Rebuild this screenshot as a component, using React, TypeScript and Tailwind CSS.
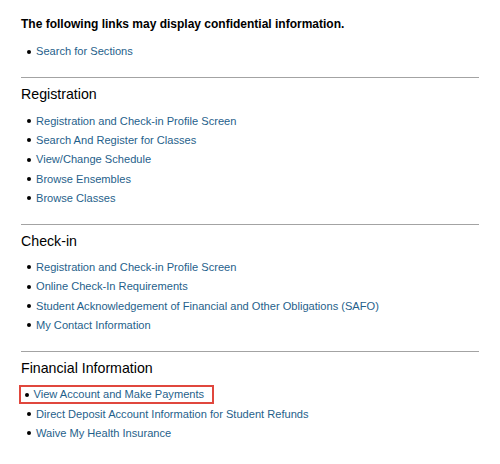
const LINK = "text-[#1f5f8b]";

type Section = { title: string; links: string[] };

const SECTIONS: Section[] = [
  {
    title: "Registration",
    links: [
      "Registration and Check-in Profile Screen",
      "Search And Register for Classes",
      "View/Change Schedule",
      "Browse Ensembles",
      "Browse Classes",
    ],
  },
  {
    title: "Check-in",
    links: [
      "Registration and Check-in Profile Screen",
      "Online Check-In Requirements",
      "Student Acknowledgement of Financial and Other Obligations (SAFO)",
      "My Contact Information",
    ],
  },
  {
    title: "Financial Information",
    links: [
      "View Account and Make Payments",
      "Direct Deposit Account Information for Student Refunds",
      "Waive My Health Insurance",
    ],
  },
];

function LinkRow({ text, boxed = false }: { text: string; boxed?: boolean }) {
  return (
    <li
      className={`flex h-[19.3px] items-center ${
        boxed ? "-ml-[2px] w-[195px] border-[2.5px] border-[#e0473d] pl-[3.5px]" : "pl-[6px]"
      }`}
    >
      <span className="h-[4px] w-[4px] shrink-0 rounded-full bg-black" />
      <a href="#" className={`ml-[5px] text-[11.1px] ${LINK}`}>
        {text}
      </a>
    </li>
  );
}

export default function App() {
  return (
    <div
      className="h-[464px] w-[500px] bg-white px-[21px] pt-[16px] text-black"
      style={{ fontFamily: '"Liberation Sans", Arial, sans-serif' }}
    >
      <p className="h-[16px] text-[12px] font-bold leading-[16px]">
        The following links may display confidential information.
      </p>
      <ul className="mt-[10px]">
        <LinkRow text="Search for Sections" />
      </ul>

      {SECTIONS.map((s) => (
        <section key={s.title}>
          <div className="mt-[16px] h-px bg-[#a3a3a3]" />
          <h2 className="mt-[6px] h-[20px] text-[14.2px] leading-[20px]">{s.title}</h2>
          <ul className="mt-[7px]">
            {s.links.map((l, i) => (
              <LinkRow key={l} text={l} boxed={s.title === "Financial Information" && i === 0} />
            ))}
          </ul>
        </section>
      ))}
    </div>
  );
}
